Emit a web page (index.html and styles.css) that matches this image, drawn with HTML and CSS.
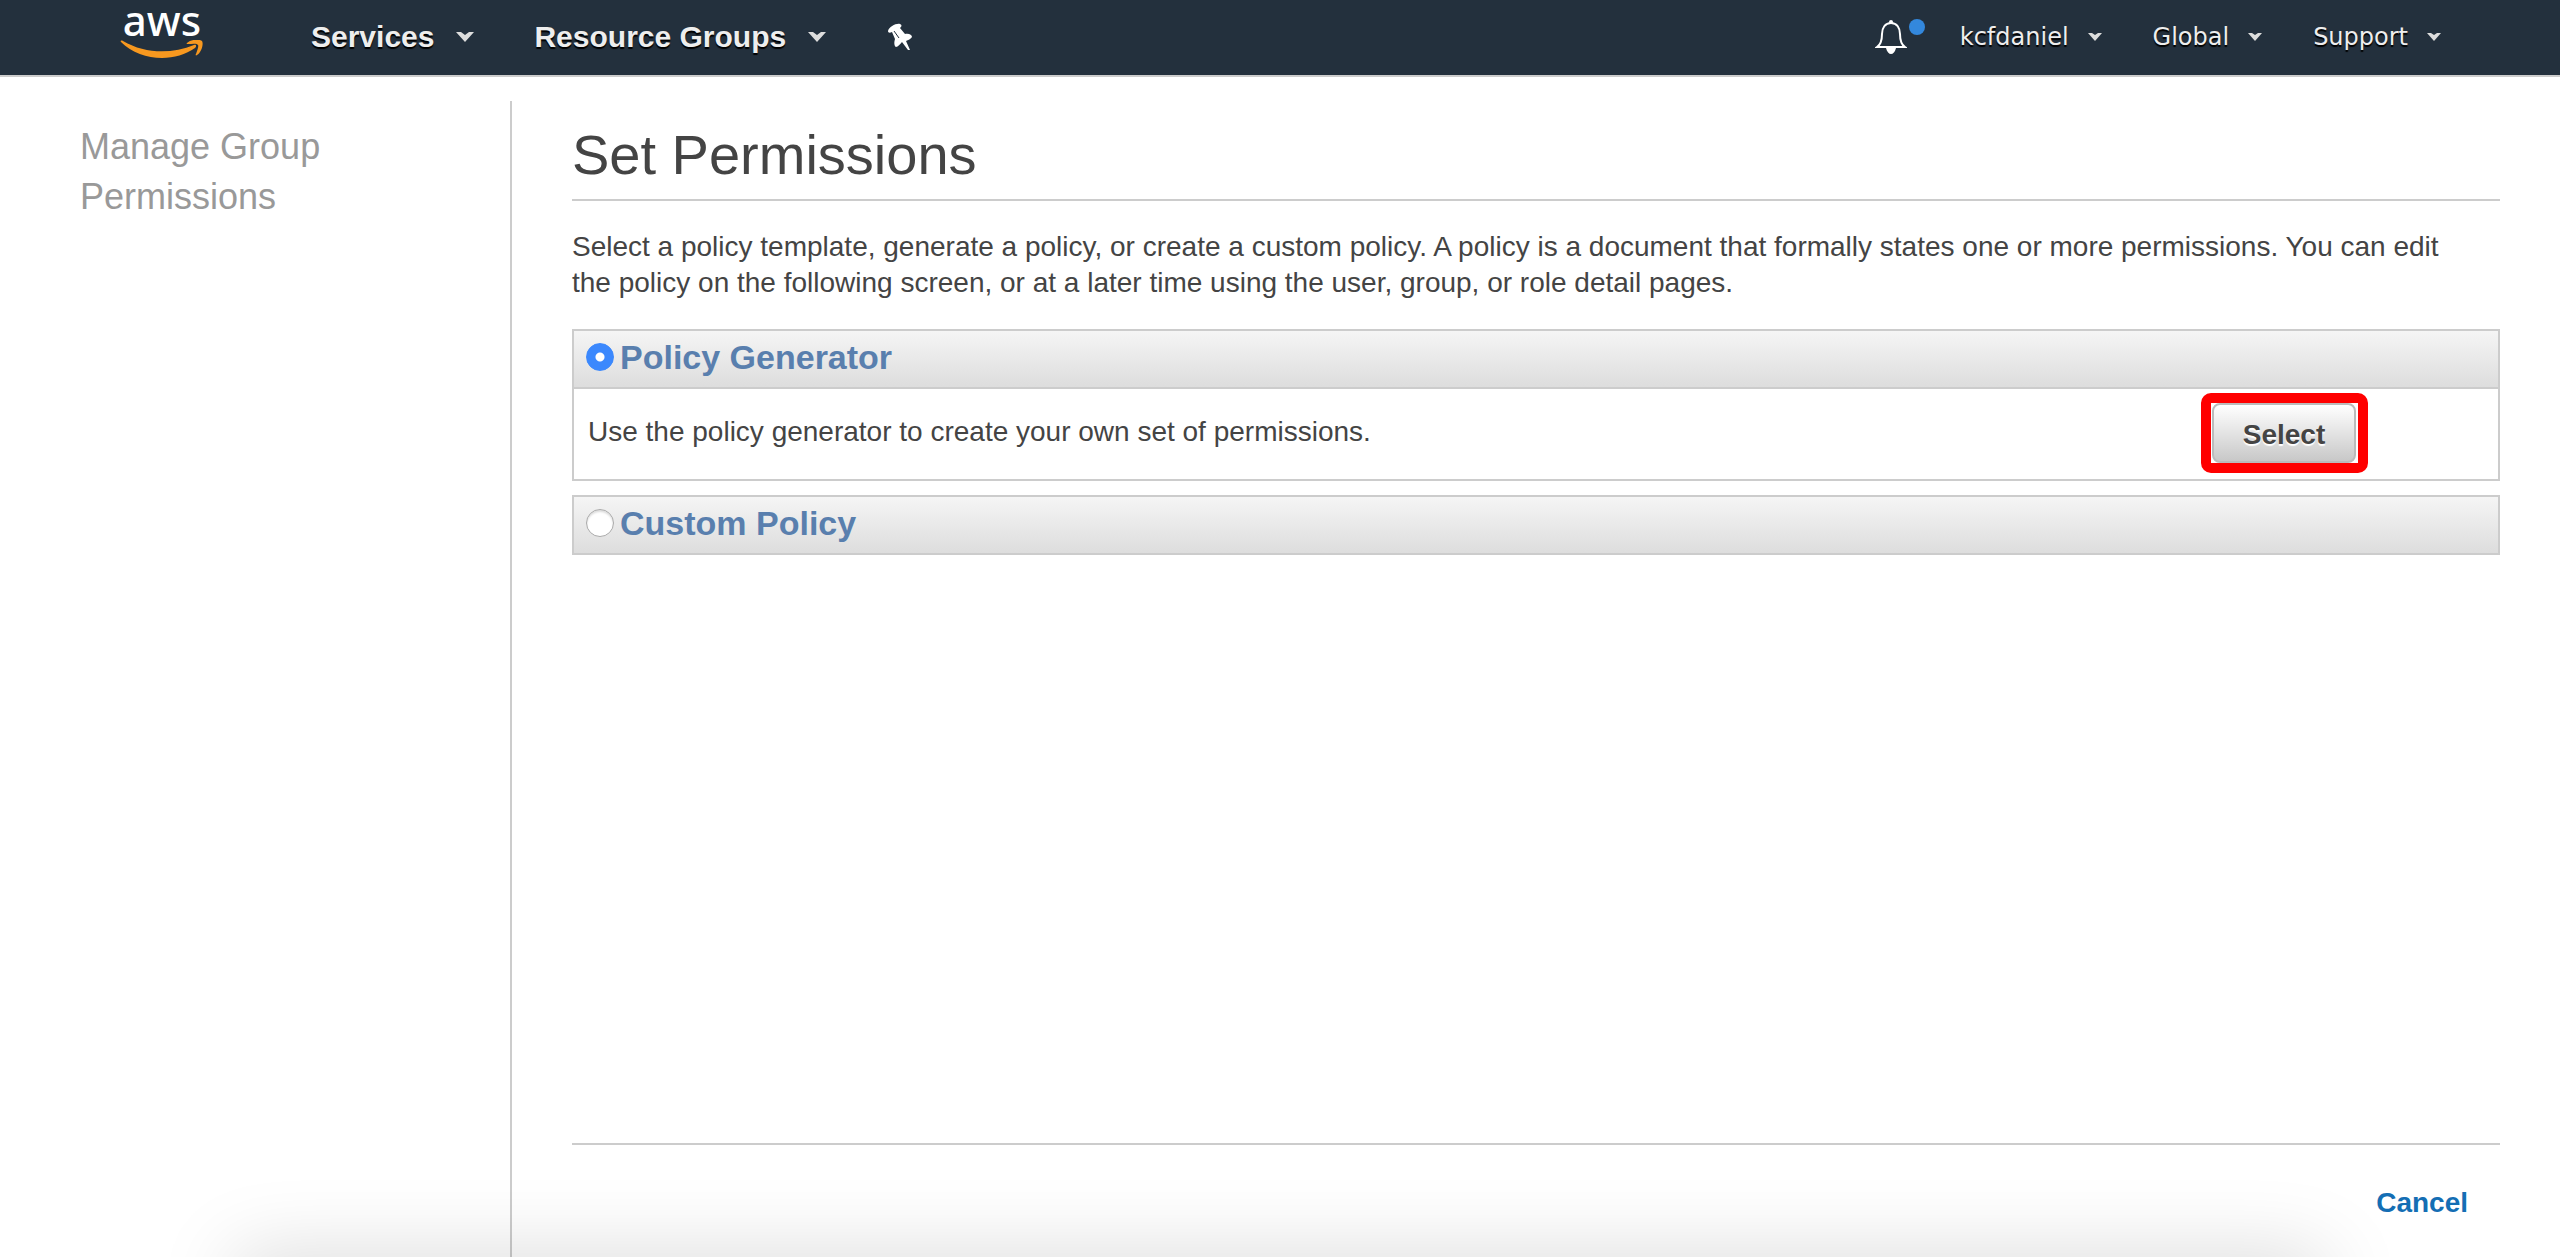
FILE: index.html
```html
<!DOCTYPE html>
<html lang="en">
<head>
<meta charset="utf-8">
<meta name="viewport" content="width=device-width, initial-scale=1">
<title>Set Permissions</title>
<link rel="stylesheet" href="styles.css">
</head>
<body>
<header class="topbar">
  <a class="logo" href="#" aria-label="AWS home">
    <span class="logo-text">aws</span>
    <svg class="logo-smile" viewBox="0 0 84 20" aria-hidden="true">
      <path fill="#f7981f" d="M1 2C0 1 1 0 3 1C25 14 52 14 74 5C76 4 77 6 75 8C54 23 20 21 1 2Z"/>
      <path fill="#f7981f" d="M67 3C71-1 80-1 82 1C84 4 81 13 77 15C76 16 75 15 76 14C77 11 79 6 78 5C77 3 72 4 68 4C67 4 66 4 67 3Z"/>
    </svg>
  </a>
  <nav class="nav-main">
    <button class="nav-item" type="button">Services <svg class="caret" viewBox="0 0 18 10" aria-hidden="true"><path d="M0 0H5L9 3L13 0H18L9 10Z"/></svg></button>
    <button class="nav-item" type="button">Resource Groups <svg class="caret" viewBox="0 0 18 10" aria-hidden="true"><path d="M0 0H5L9 3L13 0H18L9 10Z"/></svg></button>
    <button class="pin" type="button" aria-label="Pin shortcuts">
      <svg viewBox="0 0 24 28" width="24" height="28" aria-hidden="true"><path fill="#fff" d="M0 8C1 4 8 0 12 1C14 2 14 3 12 5L17 11C21 10 24 12 24 14C23 16 20 17 18 18L22 27L20 27L14 19C12 21 10 24 8 24C6 23 6 19 7 16L4 9C2 10 0 10 0 8Z"/><path stroke="#23303d" fill="none" d="M6 8L11 15"/></svg>
    </button>
  </nav>
  <nav class="nav-user">
    <button class="bell" type="button" aria-label="Notifications">
      <svg viewBox="0 0 32 36" width="32" height="36" aria-hidden="true"><circle cx="16" cy="3" r="2" fill="#fff"/><path fill="none" stroke="#fff" stroke-width="2" d="M16 4C10 4 7 9 7 15C7 21 5 26 2 28H30C27 26 25 21 25 15C25 9 22 4 16 4Z"/><path fill="#fff" d="M11 29H21C20 33 18 35 16 35C14 35 12 33 11 29Z"/></svg>
      <span class="dot"></span>
    </button>
    <button class="user-item" type="button">kcfdaniel <svg class="caret caret-small" viewBox="0 0 14 8" aria-hidden="true"><path d="M0 0H4L7 2L10 0H14L7 8Z"/></svg></button>
    <button class="user-item" type="button">Global <svg class="caret caret-small" viewBox="0 0 14 8" aria-hidden="true"><path d="M0 0H4L7 2L10 0H14L7 8Z"/></svg></button>
    <button class="user-item" type="button">Support <svg class="caret caret-small" viewBox="0 0 14 8" aria-hidden="true"><path d="M0 0H4L7 2L10 0H14L7 8Z"/></svg></button>
  </nav>
</header>
<div class="page">
  <aside class="sidebar">Manage Group Permissions</aside>
  <main class="content">
    <h1>Set Permissions</h1>
    <p class="intro">Select a policy template, generate a policy, or create a custom policy. A policy is a document that formally states one or more permissions. You can edit the policy on the following screen, or at a later time using the user, group, or role detail pages.</p>
    <section class="option">
      <div class="option-head">
        <input type="radio" name="policy" id="generator" checked>
        <label for="generator">Policy Generator</label>
      </div>
      <div class="option-body">
        <p>Use the policy generator to create your own set of permissions.</p>
        <div class="highlight"><button class="select" type="button">Select</button></div>
      </div>
    </section>
    <section class="option">
      <div class="option-head">
        <input type="radio" name="policy" id="custom">
        <label for="custom">Custom Policy</label>
      </div>
    </section>
    <footer class="actions"><a href="#">Cancel</a></footer>
  </main>
</div>
<div class="bottom-shade" aria-hidden="true"></div>
</body>
</html>
```
FILE: styles.css
```css
* { box-sizing: border-box; }

body {
  margin: 0;
  min-height: 100vh;
  display: flex;
  flex-direction: column;
  background: #fff;
  color: #444;
  font: 28px/36px "Liberation Sans", Arial, sans-serif;
}

button {
  margin: 0;
  padding: 0;
  border: 0;
  background: none;
  color: inherit;
  font: inherit;
}

.topbar {
  display: flex;
  height: 77px;
  padding: 0 119px 0 120px;
  background: #23303d;
  border-bottom: 2px solid #ccc;
  color: #eee;
}

.logo {
  width: 84px;
  height: 60px;
  display: flex;
  flex-direction: column;
  align-items: center;
  color: #fff;
  text-decoration: none;
}
.logo-text {
  font: 500 42px/40px "Noto Sans", sans-serif;
}
.logo-smile { width: 84px; height: 20px; }

.nav-main, .nav-user { display: flex; align-items: center; height: 73px; }
.nav-main { margin-left: 107px; gap: 60px; }
.nav-user { margin-left: auto; gap: 51px; }

.nav-item, .user-item {
  display: flex;
  align-items: center;
  text-shadow: 0 2px 1px #000;
}
.nav-item { gap: 22px; font-weight: bold; font-size: 30px; }
.user-item { gap: 19px; font-family: "DejaVu Sans", Verdana, sans-serif; font-size: 24px; }
.caret { width: 18px; height: 10px; fill: #ddd; }
.caret-small { width: 14px; height: 8px; }
.pin { display: flex; padding-left: 2px; }
.bell { display: flex; position: relative; margin-right: 2px; }
.dot {
  position: absolute;
  left: 34px;
  top: 0;
  width: 16px;
  height: 16px;
  border-radius: 50%;
  background: #3388dd;
}

.page { flex: 1; display: flex; padding-top: 24px; }

.sidebar {
  width: 512px;
  flex: none;
  padding: 21px 130px 0 80px;
  border-right: 2px solid #ccc;
  color: #999;
  font-size: 36px;
  line-height: 50px;
}

.content {
  flex: 1;
  display: flex;
  flex-direction: column;
  padding: 22px 60px 0;
}

h1 {
  margin: 0 0 28px;
  padding-bottom: 12px;
  border-bottom: 2px solid #ccc;
  font-size: 56px;
  line-height: 64px;
  font-weight: normal;
}

p { margin: 0; }
.intro { margin-bottom: 28px; padding-right: 30px; }

.option { margin-bottom: 14px; border: 2px solid #ccc; }
.option-head {
  display: flex;
  align-items: center;
  gap: 6px;
  height: 56px;
  padding: 0 12px 4px;
  background: linear-gradient(#f5f5f5, #ddd);
  color: #597fae;
  font-size: 34px;
  font-weight: bold;
}

input[type="radio"] {
  appearance: none;
  width: 28px;
  height: 28px;
  margin: 0;
  border: 1px solid #aaa;
  border-radius: 50%;
  background: #fff;
  box-shadow: inset 0 2px 2px #ddd;
}
input[type="radio"]:checked {
  border-color: #3b88fd;
  background: radial-gradient(circle, #fff 4px, #3b88fd 5px);
  box-shadow: none;
}

.option-body {
  display: flex;
  justify-content: space-between;
  align-items: flex-start;
  height: 92px;
  padding: 4px 130px 0 14px;
  border-top: 2px solid #ccc;
}
.option-body p { padding-top: 21px; }

.highlight {
  border: 10px solid #f00;
  border-radius: 10px;
  padding: 0 2px 0 1px;
}
.select {
  display: block;
  width: 144px;
  height: 60px;
  padding-top: 4px;
  border: 2px solid #bbb;
  border-radius: 8px;
  background: linear-gradient(#fff, #c8c8c8);
  font-weight: bold;
  text-shadow: 0 2px 1px #fff;
}

.actions {
  margin-top: auto;
  height: 114px;
  padding: 40px 32px 0;
  border-top: 2px solid #ccc;
  text-align: right;
}
.actions a { color: #146eb4; font-weight: bold; text-decoration: none; }

/* soft shade rising from the bottom edge of the window */
.bottom-shade {
  position: fixed;
  left: 236px;
  right: 236px;
  bottom: -60px;
  height: 60px;
  box-shadow: 0 0 80px rgba(0, 0, 0, 0.17);
  pointer-events: none;
}
```
